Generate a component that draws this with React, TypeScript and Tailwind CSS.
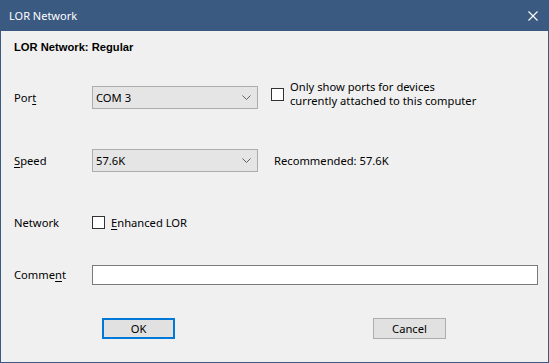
import React from 'react';

const font = { fontFamily: '"Noto Sans", "Open Sans", sans-serif' };

function Chevron() {
  return (
    <svg width="9" height="5" viewBox="0 0 9 5" className="shrink-0">
      <path d="M0.5 0.5 L4.5 4.5 L8.5 0.5" fill="none" stroke="#606060" strokeWidth="1" />
    </svg>
  );
}

function Combo({ value }: { value: string }) {
  return (
    <div className="flex h-[23px] w-[166px] items-center justify-between border border-[#adadad] bg-[#e5e5e5] pl-[3px] pr-[6px]">
      <span>{value}</span>
      <Chevron />
    </div>
  );
}

function CheckBox() {
  return <div className="h-[13px] w-[13px] shrink-0 border border-[#333333] bg-white" />;
}

export default function App() {
  return (
    <div
      className="flex h-[363px] w-[549px] flex-col bg-[#3b5a82] text-[11.2px] leading-[16px] text-black"
      style={font}
    >
      {/* Title bar */}
      <div className="flex h-[31px] shrink-0 items-center justify-between pl-[9px] pr-[11px] text-white">
        <span className="text-[11px]">LOR Network</span>
        <svg width="10" height="10" viewBox="0 0 10 10">
          <path d="M0.5 0.5 L9.5 9.5 M9.5 0.5 L0.5 9.5" stroke="white" strokeWidth="1.1" />
        </svg>
      </div>

      {/* Body */}
      <div className="mx-px mb-px flex flex-1 flex-col bg-[#f0f0f0] pl-[13px]">
        <div className="mt-[8px] font-['Liberation_Sans',sans-serif] text-[11.2px] font-bold">
          LOR Network: Regular
        </div>

        {/* Port */}
        <div className="mt-[31px] flex h-[23px] items-center">
          <div className="w-[78px]">
            Por<u className="underline-offset-2">t</u>
          </div>
          <Combo value="COM 3" />
          <div className="ml-[13px] flex items-start">
            <div className="mt-[1px]">
              <CheckBox />
            </div>
            <div className="-mt-[7px] ml-[6px] flex flex-col leading-[14px]">
              <span>Only show ports for devices</span>
              <span>currently attached to this computer</span>
            </div>
          </div>
        </div>

        {/* Speed */}
        <div className="mt-[40px] flex h-[23px] items-center">
          <div className="w-[78px]">
            <u className="underline-offset-2">S</u>peed
          </div>
          <Combo value="57.6K" />
          <div className="ml-[16px]">Recommended: 57.6K</div>
        </div>

        {/* Network */}
        <div className="mt-[39px] flex h-[23px] items-center">
          <div className="w-[78px]">Network</div>
          <CheckBox />
          <div className="ml-[6px]">
            <u className="underline-offset-2">E</u>nhanced LOR
          </div>
        </div>

        {/* Comment */}
        <div className="mt-[31px] flex h-[20px] items-center">
          <div className="w-[78px]">
            Comme<u className="underline-offset-2">n</u>t
          </div>
          <div className="h-[20px] w-[446px] border border-[#7a7a7a] bg-white" />
        </div>

        {/* Buttons */}
        <div className="mt-[33px] flex">
          <button className="ml-[88px] flex h-[21px] w-[73px] items-center justify-center border-2 border-[#0078d7] bg-[#e1e1e1]">
            OK
          </button>
          <button className="ml-[198px] flex h-[21px] w-[73px] items-center justify-center border border-[#adadad] bg-[#e1e1e1]">
            Cancel
          </button>
        </div>
      </div>
    </div>
  );
}
